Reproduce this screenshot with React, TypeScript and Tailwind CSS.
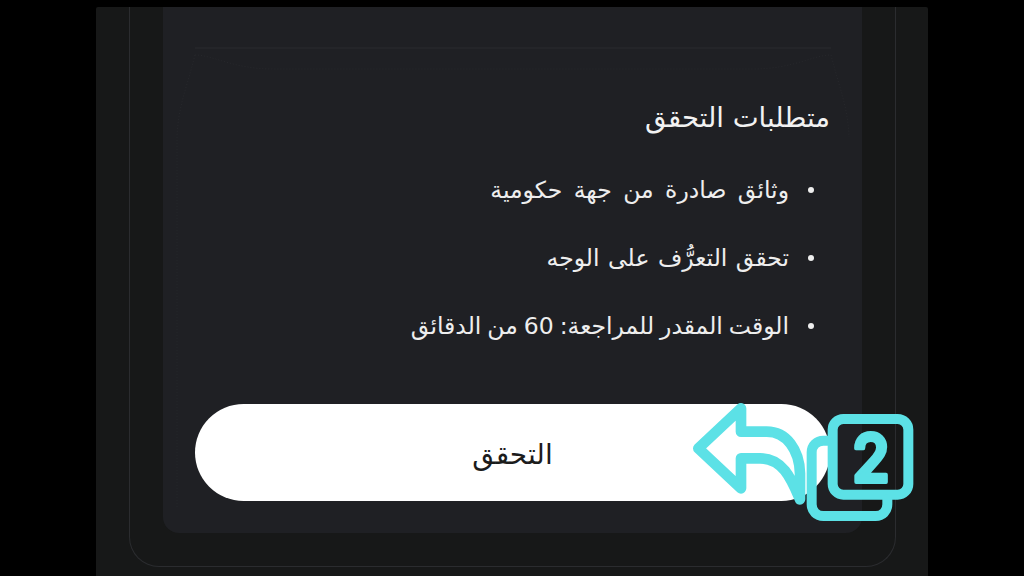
const FONT = "font-['DejaVu_Sans',sans-serif]";

const requirements = [
  { text: "وثائق صادرة من جهة حكومية", spacing: "[word-spacing:4px]" },
  { text: "تحقق التعرُّف على الوجه", spacing: "[word-spacing:1px]" },
  { text: "الوقت المقدر للمراجعة: 60 من الدقائق", spacing: "[word-spacing:-1.5px]" },
];

export default function App() {
  return (
    <div className={`relative h-[576px] w-[1024px] overflow-hidden bg-black pt-[7px] ${FONT}`}>
      <div className="mx-auto h-[569px] w-[832px] rounded-t-[2px] bg-[#171818] pl-[33px] pr-[32px]">
        {/* inner outline */}
        <div className="h-[560px] rounded-b-[30px] border-x border-b border-[#2b2c2f] px-[33px]">
          <div dir="rtl" className="flex h-[526px] flex-col rounded-b-[16px] bg-[#1f2024] px-[32px]">
            <h2 className="mt-[94px] text-[27.5px] leading-[32px] font-normal text-[#f2f2f2]">متطلبات التحقق</h2>
            <ul className="mt-[41px] flex flex-col gap-[36px]">
              {requirements.map(item => (
                <li key={item.text} className="flex items-center gap-[19px] pr-[16px] text-[23.5px] leading-[32px] text-[#eeeeee]">
                  <span className="h-[6px] w-[6px] rounded-full bg-[#eeeeee]" />
                  <span className={item.spacing}>{item.text}</span>
                </li>
              ))}
            </ul>
            <button className="mt-[62px] flex h-[97px] w-[635px] items-center justify-center rounded-full bg-white pt-[4px] text-[28px] text-[#1c1c1c]">
              التحقق
            </button>
          </div>
        </div>
      </div>

      {/* faint fold line over the card */}
      <svg className="absolute left-[163px] top-[7px] pointer-events-none" width="700" height="526" viewBox="0 0 700 526" fill="none">
        <path d="M32 41H668" stroke="#2a2b2f" strokeWidth="1" />
        <path d="M32 48C50 48 70 62 110 62H590C630 62 650 48 668 48C676 80 685 100 686 130" stroke="#27282c" strokeWidth="1" strokeDasharray="1 2" />
        <path d="M32 48C24 80 15 100 14 130V500" stroke="#27282c" strokeWidth="1" strokeDasharray="1 2" />
      </svg>

      {/* tutorial overlay */}
      <svg className="absolute left-[680px] top-[390px] pointer-events-none" width="260" height="146" viewBox="0 0 780 438" fill="none" stroke="#5ce1e6" strokeLinecap="round" strokeLinejoin="round">
        <path strokeWidth="32" d="M55 175L183 55V125H260C320 125 358 180 360 250V328C335 270 310 205 240 205H183V295Z" />
        <rect x="458" y="87" width="227" height="227" rx="32" strokeWidth="30" />
        <path strokeWidth="30" d="M443 152H430C410 152 395 167 395 187V343C395 363 410 378 430 378H587C607 378 622 363 622 343V328" />
        <text transform="translate(573 276) scale(0.9 1)" textAnchor="middle" fontFamily="Inter, sans-serif" fontWeight="600" fontSize="200" fill="#5ce1e6" stroke="#5ce1e6" strokeWidth="12">2</text>
      </svg>
    </div>
  );
}
